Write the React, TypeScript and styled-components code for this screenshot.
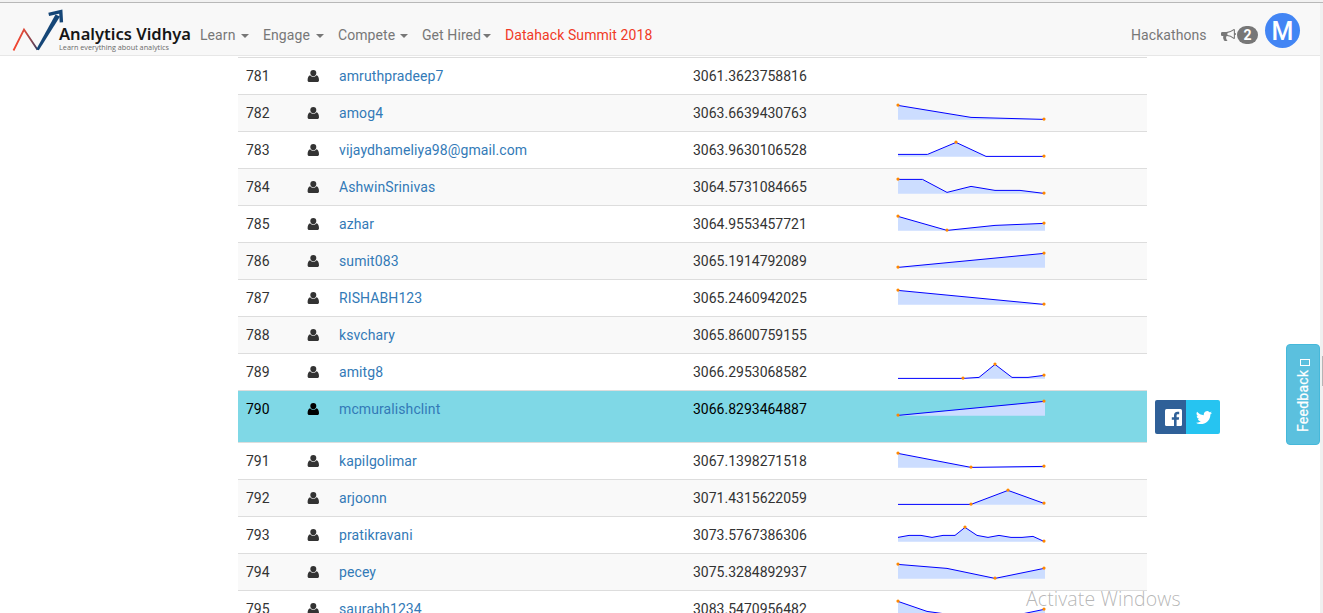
import React from "react";
import styled, { createGlobalStyle } from "styled-components";

const GlobalStyle = createGlobalStyle`
  * { box-sizing: border-box; }
  html, body { margin: 0; padding: 0; overflow: hidden; background: #fff; }
  body { font-family: Roboto, "Liberation Sans", sans-serif; font-size: 14px; line-height: 20px; color: #333; }
`;

const Page = styled.div`
  position: relative;
  width: 1323px;
  height: 613px;
  overflow: hidden;
  display: flex;
  flex-direction: column;
`;

const WindowEdge = styled.div`
  flex: none;
  height: 3px;
  background: #f2f2f2;
  border-bottom: 1px solid #b8b8b8;
`;

const Body = styled.div`
  flex: 1;
  min-height: 0;
  display: flex;
`;

const Viewport = styled.div`
  flex: 1;
  min-width: 0;
  overflow: hidden;
`;

const ScrollTrack = styled.div`
  width: 3px;
  background: #f0f0f0;
  padding: 353px 0 0 2px;
`;

const ScrollThumb = styled.div`
  height: 30px;
  background: #b5b5b5;
`;

const Navbar = styled.header`
  height: 53px;
  background: #f8f8f8;
  border-bottom: 1px solid #e7e7e7;
  display: flex;
  align-items: flex-start;
  padding: 0 20px 0 12px;
`;

const Logo = styled.svg`
  display: block;
  flex: none;
  width: 184px;
  height: 52px;
  margin-right: 4px;
`;

const Menu = styled.nav<{ $grow?: boolean }>`
  display: flex;
  flex: ${(p) => (p.$grow ? "1" : "none")};
  padding-top: 22px;
`;

const MenuItem = styled.a<{ $width: number; $accent?: boolean }>`
  display: flex;
  align-items: center;
  flex: none;
  width: ${(p) => p.$width}px;
  color: ${(p) => (p.$accent ? "#f03a26" : "#777")};
  letter-spacing: 0.08px;
  white-space: nowrap;
`;

const Caret = styled.span<{ $gap: number }>`
  margin: 2px 0 0 ${(p) => p.$gap}px;
  border-top: 4px solid #777;
  border-left: 4px solid transparent;
  border-right: 4px solid transparent;
`;

const Notifications = styled.div`
  display: flex;
  align-items: center;
  height: 18px;
  margin: 23px 7px 0 0;
`;

const Badge = styled.span`
  width: 21px;
  height: 18px;
  margin-left: 1px;
  border-radius: 9px;
  background: #777;
  color: #fff;
  font-size: 14px;
  font-weight: 700;
  line-height: 19px;
  text-align: center;
`;

const Avatar = styled.div`
  width: 35px;
  height: 35px;
  margin-top: 10px;
  border-radius: 50%;
  background: #4285f4;
  color: #fff;
  font-size: 25px;
  font-weight: 500;
  line-height: 38px;
  text-align: center;
`;

const Board = styled.main`
  width: 909px;
  margin: 1px 0 0 238px;
`;

const Row = styled.div<{ $striped: boolean; $active?: boolean }>`
  display: grid;
  grid-template-columns: 61px 32px 354px 204px 258px;
  height: ${(p) => (p.$active ? 52 : 37)}px;
  border-top: 1px solid #ddd;
  background: ${(p) => (p.$active ? "#7fd8e6" : p.$striped ? "#f9f9f9" : "#fff")};
  color: ${(p) => (p.$active ? "#000" : "#333")};
`;

const Cell = styled.div`
  padding: 8px;
  white-space: nowrap;
`;

const UserLink = styled.a`
  color: #337ab7;
  letter-spacing: 0.1px;
`;

const PersonIcon = styled.svg`
  display: block;
  width: 12px;
  height: 12px;
  margin: 4px 0 0;
  fill: currentColor;
`;

const Spark = styled.svg`
  display: block;
  width: 152px;
  height: 20px;
  overflow: visible;
`;

const ShareBar = styled.div`
  position: absolute;
  left: 1155px;
  top: 400px;
  display: flex;
  border-radius: 2px;
  overflow: hidden;
`;

const ShareButton = styled.a<{ $color: string; $width: number }>`
  display: flex;
  align-items: center;
  width: ${(p) => p.$width}px;
  height: 34px;
  padding-left: 10px;
  background: ${(p) => p.$color};
`;

const FeedbackTab = styled.div`
  position: absolute;
  left: 1286px;
  top: 344px;
  width: 34px;
  height: 101px;
  padding-top: 12px;
  border: 1px solid #46b8da;
  border-radius: 4px;
  background: #5bc0de;
  color: #fff;
  writing-mode: vertical-rl;
  transform: rotate(180deg);
  display: flex;
  align-items: center;
  white-space: nowrap;
  letter-spacing: 0.25px;
  -webkit-text-stroke: 0.2px #fff;
`;

const MissingGlyph = styled.span`
  width: 10px;
  height: 7px;
  margin: 4px 3px 0 0;
  border: 1px solid #fff;
  transform: translateX(-1px);
`;

const Watermark = styled.div`
  position: absolute;
  left: 1026px;
  top: 586px;
  color: rgba(120, 120, 120, 0.55);
  font-family: "Open Sans", "Noto Sans", sans-serif;
  font-size: 19.5px;
  font-weight: 300;
  letter-spacing: 0.1px;
  line-height: 26px;
  white-space: nowrap;
`;

type Point = [number, number];

interface Entry {
  rank: number;
  name: string;
  score: string;
  line?: Point[];
  dots?: number[];
  active?: boolean;
}

/* Points run from x 0 to 146 and from y 0 (best) to 14 (worst); dots lists the marked ones. */
const entries: Entry[] = [
  { rank: 781, name: "amruthpradeep7", score: "3061.3623758816" },
  { rank: 782, name: "amog4", score: "3063.6639430763", line: [[0, 0], [73, 12], [146, 14]], dots: [0, 2] },
  { rank: 783, name: "vijaydhameliya98@gmail.com", score: "3063.9630106528", line: [[0, 12], [29.5, 12], [58, 0], [88, 14], [146, 14]], dots: [2, 4] },
  { rank: 784, name: "AshwinSrinivas", score: "3064.5731084665", line: [[0, 0], [24.5, 0], [49, 13], [73, 7], [97, 11], [122, 11], [146, 14]], dots: [0, 6] },
  { rank: 785, name: "azhar", score: "3064.9553457721", line: [[0, 0], [49, 14], [97, 9], [146, 7]], dots: [0, 1, 3] },
  { rank: 786, name: "sumit083", score: "3065.1914792089", line: [[0, 14], [146, 0]], dots: [0, 1] },
  { rank: 787, name: "RISHABH123", score: "3065.2460942025", line: [[0, 0], [146, 14]], dots: [0, 1] },
  { rank: 788, name: "ksvchary", score: "3065.8600759155" },
  { rank: 789, name: "amitg8", score: "3066.2953068582", line: [[0, 14], [65, 14], [81, 13], [97, 0], [114, 13], [130, 13], [146, 11]], dots: [1, 3, 6] },
  { rank: 790, name: "mcmuralishclint", score: "3066.8293464887", line: [[0, 14], [146, 0]], dots: [0, 1], active: true },
  { rank: 791, name: "kapilgolimar", score: "3067.1398271518", line: [[0, 0], [73, 14], [146, 13]], dots: [0, 1, 2] },
  { rank: 792, name: "arjoonn", score: "3071.4315622059", line: [[0, 14], [73, 14], [110, 0], [146, 13]], dots: [1, 2, 3] },
  { rank: 793, name: "pratikravani", score: "3073.5767386306", line: [[0, 10], [11, 8], [23, 8], [34, 10], [45, 8], [57, 8], [67, 0], [79, 8], [90, 10], [101, 8], [113, 10], [124, 10], [135, 9], [146, 14]], dots: [6, 13] },
  { rank: 794, name: "pecey", score: "3075.3284892937", line: [[0, 0], [49, 4], [97, 14], [146, 4]], dots: [0, 2, 3] },
  { rank: 795, name: "saurabh1234", score: "3083.5470956482", line: [[0, 0], [29, 10], [58, 14], [88, 14], [117, 14], [146, 8]], dots: [0, 5] },
];

function Sparkline({ line, dots }: { line: Point[]; dots: number[] }) {
  const pts = line.map(([x, y]) => `${x + 1},${y + 2.4}`).join(" ");
  return (
    <Spark viewBox="0 0 152 20">
      <polygon points={`1,16.7 ${pts} 148,${line[line.length - 1][1] + 2.4} 148,16.7`} fill="#ccddff" />
      <polyline points={pts} fill="none" stroke="#0000ff" strokeWidth="1" />
      {dots.map((i) => (
        <circle key={i} cx={line[i][0] + 1} cy={line[i][1] + 2.1} r="1.6" fill="#ff8800" />
      ))}
    </Spark>
  );
}

function BrandLogo() {
  return (
    <Logo viewBox="12 3 184 52">
      <defs>
        <linearGradient id="rise" gradientUnits="userSpaceOnUse" x1="14" y1="0" x2="40" y2="0">
          <stop offset="0" stopColor="#f4452f" />
          <stop offset="0.42" stopColor="#d94a3c" />
          <stop offset="1" stopColor="#173a68" />
        </linearGradient>
      </defs>
      <path d="M13.5 50.5 L24 29.5 L37.5 49.8" fill="none" stroke="url(#rise)" strokeWidth="1.8" />
      <path d="M36.3 49.3 L55.5 14.5 L60 16.5 L38.8 50.2 Z" fill="#154677" />
      <path d="M48.7 14.4 L60.8 11.7 L61.4 22.3" fill="none" stroke="#154677" strokeWidth="3.4" />
      <text x="59" y="40" textLength="132" lengthAdjust="spacingAndGlyphs" fontFamily="'Noto Sans', 'Open Sans', sans-serif" fontWeight="600" fontSize="15.4" fill="#161616">Analytics Vidhya</text>
      <text x="59" y="50" textLength="110" lengthAdjust="spacingAndGlyphs" fontFamily="'Open Sans', sans-serif" fontSize="7" fill="#6a6a6a">Learn everything about analytics</text>
    </Logo>
  );
}

export default function App() {
  return (
    <Page>
      <GlobalStyle />
      <WindowEdge />
      <Body>
        <Viewport>
          <Navbar>
            <BrandLogo />
            <Menu $grow>
              <MenuItem $width={63}>Learn<Caret $gap={6} /></MenuItem>
              <MenuItem $width={75}>Engage<Caret $gap={6} /></MenuItem>
              <MenuItem $width={84}>Compete<Caret $gap={5} /></MenuItem>
              <MenuItem $width={83}>Get Hired<Caret $gap={2} /></MenuItem>
              <MenuItem $width={150} $accent>Datahack Summit 2018</MenuItem>
            </Menu>
            <Menu>
              <MenuItem $width={90}>Hackathons</MenuItem>
            </Menu>
            <Notifications>
              <svg width="15" height="14" viewBox="0 0 1792 1792" preserveAspectRatio="none">
                <path fill="#777" d="M1664 640q53 0 90.5 37.5t37.5 90.5-37.5 90.5-90.5 37.5v384q0 52-38 90t-90 38q-417-347-812-380-58 19-91 66t-31 100.5 40 92.5q-20 33-23 65.5t6 58 33.5 55 48 50 61.5 50.5q-29 58-111.5 83t-168.5 11.5-132-55.5q-7-23-29.5-87.5t-32-94.5-23-89-15-101 3.5-98 22-110.5h-122q-66 0-113-47t-47-113v-192q0-66 47-113t113-47h480q435 0 896-384 52 0 90 38t38 90v384zm-128 604v-954q-394 302-768 343v270q377 42 768 341z" />
              </svg>
              <Badge>2</Badge>
            </Notifications>
            <Avatar>M</Avatar>
          </Navbar>
          <Board>
            {entries.map((e) => (
              <Row key={e.rank} $striped={e.rank % 2 === 0} $active={e.active}>
                <Cell>{e.rank}</Cell>
                <Cell>
                  <PersonIcon viewBox="0 0 12 12">
                    <ellipse cx="6.3" cy="3.1" rx="3" ry="3.1" />
                    <path d="M3.2 5.2C1.4 5.6.6 7.6.6 10.2.6 11.3 1.3 12 2.3 12h8c1 0 1.7-.7 1.7-1.8 0-2.6-.8-4.6-2.6-5C8.6 6.2 7.5 6.8 6.3 6.8S4 6.2 3.2 5.2z" />
                  </PersonIcon>
                </Cell>
                <Cell><UserLink>{e.name}</UserLink></Cell>
                <Cell>{e.score}</Cell>
                <Cell>{e.line && <Sparkline line={e.line} dots={e.dots ?? []} />}</Cell>
              </Row>
            ))}
          </Board>
        </Viewport>
        <ScrollTrack><ScrollThumb /></ScrollTrack>
      </Body>
      <ShareBar>
        <ShareButton $color="#2f6098" $width={31}>
          <svg width="17" height="17" viewBox="0 0 17 17">
            <rect width="17" height="17" rx="1.5" fill="#fff" />
            <path d="M9 17v-6.2H6.8V8.2H9V6.4C9 4 10.4 2.8 12.4 2.8h1.8v2.4h-1.3c-1 0-1.3.5-1.3 1.3v1.7h2.5l-.3 2.6h-2.2V17z" fill="#2f6098" />
          </svg>
        </ShareButton>
        <ShareButton $color="#26c4f1" $width={34}>
          <svg width="16" height="13" viewBox="0 2 24 19.6" preserveAspectRatio="none">
            <path fill="#fff" d="M23.95 4.57a10 10 0 0 1-2.82.77 4.96 4.96 0 0 0 2.16-2.72c-.95.55-2 .95-3.13 1.18a4.92 4.92 0 0 0-8.38 4.48C7.69 8.1 4.07 6.13 1.64 3.16a4.92 4.92 0 0 0 1.52 6.57 4.9 4.9 0 0 1-2.23-.61v.06a4.92 4.92 0 0 0 3.95 4.83 5 5 0 0 1-2.21.08 4.94 4.94 0 0 0 4.6 3.42A9.87 9.87 0 0 1 0 19.54a13.99 13.99 0 0 0 7.55 2.21c9.05 0 14-7.5 14-13.98 0-.21 0-.42-.02-.63a9.94 9.94 0 0 0 2.46-2.55z" />
          </svg>
        </ShareButton>
      </ShareBar>
      <FeedbackTab>Feedback<MissingGlyph /></FeedbackTab>
      <Watermark>Activate Windows</Watermark>
    </Page>
  );
}
